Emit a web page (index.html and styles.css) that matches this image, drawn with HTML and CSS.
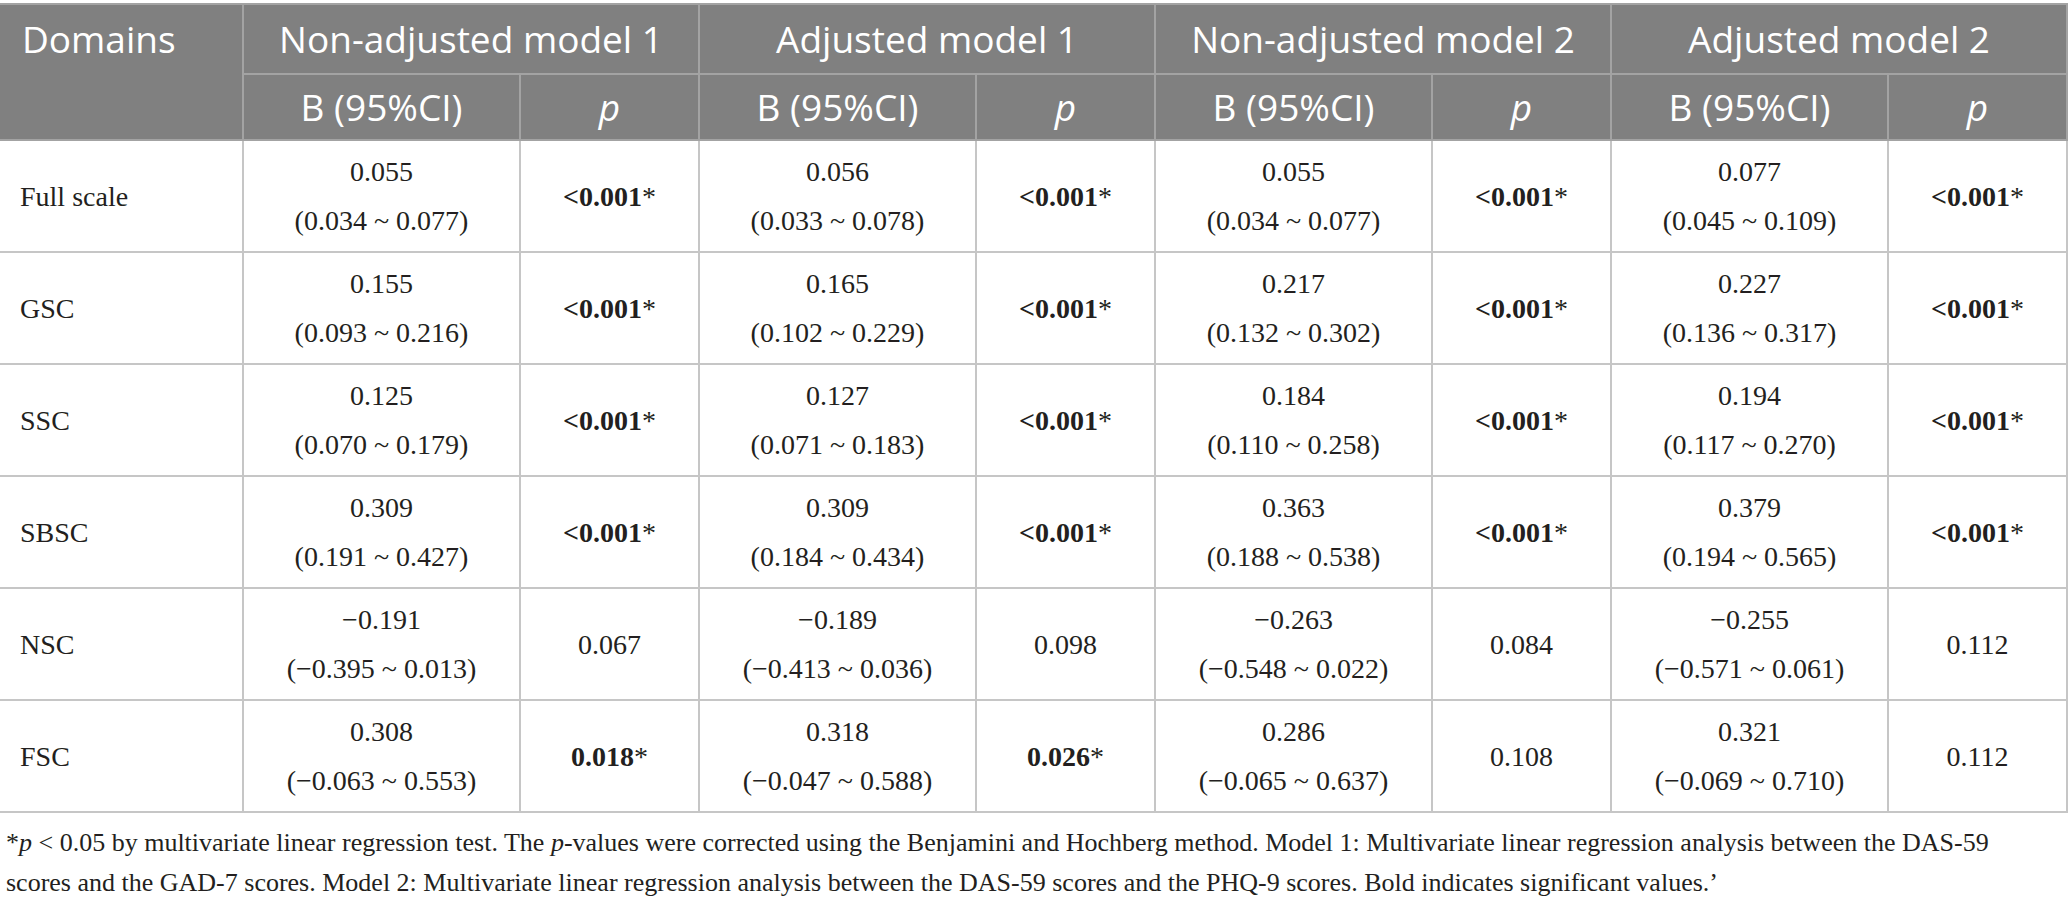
FILE: index.html
```html
<!DOCTYPE html>
<html lang="en">
    <head>
        <meta charset="utf-8">
        <title>Regression table</title>
        <link rel="stylesheet" href="styles.css">
    </head>
    <body>
      <table class="data">
        <colgroup>
          <col class="c-dom">
          <col class="c-b"><col class="c-p">
          <col class="c-b"><col class="c-p">
          <col class="c-b"><col class="c-p">
          <col class="c-b"><col class="c-p">
        </colgroup>
        <thead>
          <tr class="head-top">
            <th rowspan="2" class="dom">Domains</th>
            <th colspan="2">Non-adjusted model 1</th>
            <th colspan="2">Adjusted model 1</th>
            <th colspan="2">Non-adjusted model 2</th>
            <th colspan="2">Adjusted model 2</th>
          </tr>
          <tr class="head-sub">
            <th>B (95%CI)</th><th><i>p</i></th>
            <th>B (95%CI)</th><th><i>p</i></th>
            <th>B (95%CI)</th><th><i>p</i></th>
            <th>B (95%CI)</th><th><i>p</i></th>
          </tr>
        </thead>
        <tbody>
          <tr>
            <td class="dom">Full scale</td>
            <td>0.055<br>(0.034 ~ 0.077)</td><td><b>&lt;0.001</b>*</td>
            <td>0.056<br>(0.033 ~ 0.078)</td><td><b>&lt;0.001</b>*</td>
            <td>0.055<br>(0.034 ~ 0.077)</td><td><b>&lt;0.001</b>*</td>
            <td>0.077<br>(0.045 ~ 0.109)</td><td><b>&lt;0.001</b>*</td>
          </tr>
          <tr>
            <td class="dom">GSC</td>
            <td>0.155<br>(0.093 ~ 0.216)</td><td><b>&lt;0.001</b>*</td>
            <td>0.165<br>(0.102 ~ 0.229)</td><td><b>&lt;0.001</b>*</td>
            <td>0.217<br>(0.132 ~ 0.302)</td><td><b>&lt;0.001</b>*</td>
            <td>0.227<br>(0.136 ~ 0.317)</td><td><b>&lt;0.001</b>*</td>
          </tr>
          <tr>
            <td class="dom">SSC</td>
            <td>0.125<br>(0.070 ~ 0.179)</td><td><b>&lt;0.001</b>*</td>
            <td>0.127<br>(0.071 ~ 0.183)</td><td><b>&lt;0.001</b>*</td>
            <td>0.184<br>(0.110 ~ 0.258)</td><td><b>&lt;0.001</b>*</td>
            <td>0.194<br>(0.117 ~ 0.270)</td><td><b>&lt;0.001</b>*</td>
          </tr>
          <tr>
            <td class="dom">SBSC</td>
            <td>0.309<br>(0.191 ~ 0.427)</td><td><b>&lt;0.001</b>*</td>
            <td>0.309<br>(0.184 ~ 0.434)</td><td><b>&lt;0.001</b>*</td>
            <td>0.363<br>(0.188 ~ 0.538)</td><td><b>&lt;0.001</b>*</td>
            <td>0.379<br>(0.194 ~ 0.565)</td><td><b>&lt;0.001</b>*</td>
          </tr>
          <tr>
            <td class="dom">NSC</td>
            <td>&minus;0.191<br>(&minus;0.395 ~ 0.013)</td><td>0.067</td>
            <td>&minus;0.189<br>(&minus;0.413 ~ 0.036)</td><td>0.098</td>
            <td>&minus;0.263<br>(&minus;0.548 ~ 0.022)</td><td>0.084</td>
            <td>&minus;0.255<br>(&minus;0.571 ~ 0.061)</td><td>0.112</td>
          </tr>
          <tr>
            <td class="dom">FSC</td>
            <td>0.308<br>(&minus;0.063 ~ 0.553)</td><td><b>0.018</b>*</td>
            <td>0.318<br>(&minus;0.047 ~ 0.588)</td><td><b>0.026</b>*</td>
            <td>0.286<br>(&minus;0.065 ~ 0.637)</td><td>0.108</td>
            <td>0.321<br>(&minus;0.069 ~ 0.710)</td><td>0.112</td>
          </tr>
        </tbody>
      </table>
      <p class="note">*<i>p</i> &lt; 0.05 by multivariate linear regression test. The <i>p</i>-values were corrected using the Benjamini and Hochberg method. Model 1: Multivariate linear regression analysis between the DAS-59 scores and the GAD-7 scores. Model 2: Multivariate linear regression analysis between the DAS-59 scores and the PHQ-9 scores. Bold indicates significant values.&rsquo;</p>
    </body>
</html>
```

FILE: styles.css
```css
body { margin: 0; font-family: "Liberation Serif", "Times New Roman", serif; color: #231f20; background: #fff; }
.data { width: 2067px; margin-top: 3px; border-collapse: collapse; table-layout: fixed; }
.c-dom { width: 243px; }
.c-b { width: 277px; }
.c-p { width: 179px; }
th { background: #808080; color: #fff; font-family: "Open Sans", "Noto Sans", sans-serif; font-weight: 400; font-size: 37px; line-height: 48px; border: 2px solid #a3a3a3; padding: 0 10px; }
.head-top th { height: 68px; }
.head-sub th { height: 64px; }
th.dom { text-align: left; vertical-align: top; padding: 10px 0 0 22px; }
th i { font-style: italic; }
td { border: 2px solid #c6c6c6; height: 110px; padding: 0 8px; text-align: center; font-size: 28px; line-height: 49px; }
td.dom { text-align: left; padding-left: 20px; }
.data tr > :first-child { border-left: 0; }
.note { margin: 10px 0 0 6px; width: 2040px; font-size: 26px; line-height: 40px; }
```
